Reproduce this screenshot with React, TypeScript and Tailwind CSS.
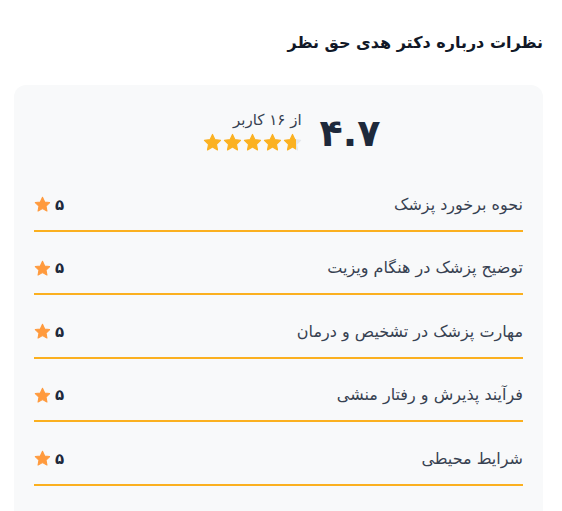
import React from "react";

const Star = ({ size, color, fill = 1, id }: { size: number; color: string; fill?: number; id: string }) => (
  <svg width={size} height={size} viewBox="0 0 24 24">
    <defs>
      <linearGradient id={id} x1="0" x2="1" y1="0" y2="0">
        <stop offset={fill} stopColor={color} />
        <stop offset={fill} stopColor="#e5e7eb" />
      </linearGradient>
    </defs>
    <path
      d="M12 1.8l3.1 6.6 7.1.9-5.2 4.9 1.3 7.1L12 17.8l-6.3 3.5L7 14.2 1.8 9.3l7.1-.9z"
      fill={`url(#${id})`}
      stroke={`url(#${id})`}
      strokeWidth="1.5"
      strokeLinejoin="round"
    />
  </svg>
);

const rows = [
  "نحوه برخورد پزشک",
  "توضیح پزشک در هنگام ویزیت",
  "مهارت پزشک در تشخیص و درمان",
  "فرآیند پذیرش و رفتار منشی",
  "شرایط محیطی",
];

export default function App() {
  return (
    <div dir="rtl" className="w-[562px] h-[511px] bg-white overflow-hidden" style={{ fontFamily: '"DejaVu Sans", sans-serif' }}>
      <div className="pr-[19px] pl-[14px] pt-[30px]">
        <h2 className="text-[16px] font-bold text-[#111827] leading-[26px]">نظرات درباره دکتر هدی حق نظر</h2>
        <div className="mt-[29px] bg-[#f8f9fa] rounded-[12px] px-[20px] pt-[24px] pb-[40px]">
          <div className="flex justify-center items-center gap-[18px] pl-[26px]">
            <div className="text-[38px] font-bold text-[#1e293b] leading-[48px]">۴.۷</div>
            <div className="flex flex-col items-start">
              <div className="text-[15px] text-[#374151] leading-[20px] -mt-[4px]">از ۱۶ کاربر</div>
              <div dir="ltr" className="flex gap-[1px] mt-[3px]">
                <Star size={19} color="#fbb121" id="s1" />
                <Star size={19} color="#fbb121" id="s2" />
                <Star size={19} color="#fbb121" id="s3" />
                <Star size={19} color="#fbb121" id="s4" />
                <Star size={19} color="#fbb121" fill={0.7} id="s5" />
              </div>
            </div>
          </div>
          <div className="mt-[11px]">
            {rows.map((r, i) => (
              <div key={i} className="h-[63.5px] flex flex-col justify-end">
                <div className="flex justify-between items-center pb-[13px]">
                  <span className="text-[16px] text-[#374151] leading-[24px]">{r}</span>
                  <span className="flex items-center gap-[4px] text-[15px] text-[#1e293b] leading-[24px]">
                    <span className="font-bold">۵</span>
                    <Star size={17} color="#ff9a3d" id={`r${i}`} />
                  </span>
                </div>
                <div className="h-[2px] bg-[#fbb01f]" />
              </div>
            ))}
          </div>
        </div>
      </div>
    </div>
  );
}
